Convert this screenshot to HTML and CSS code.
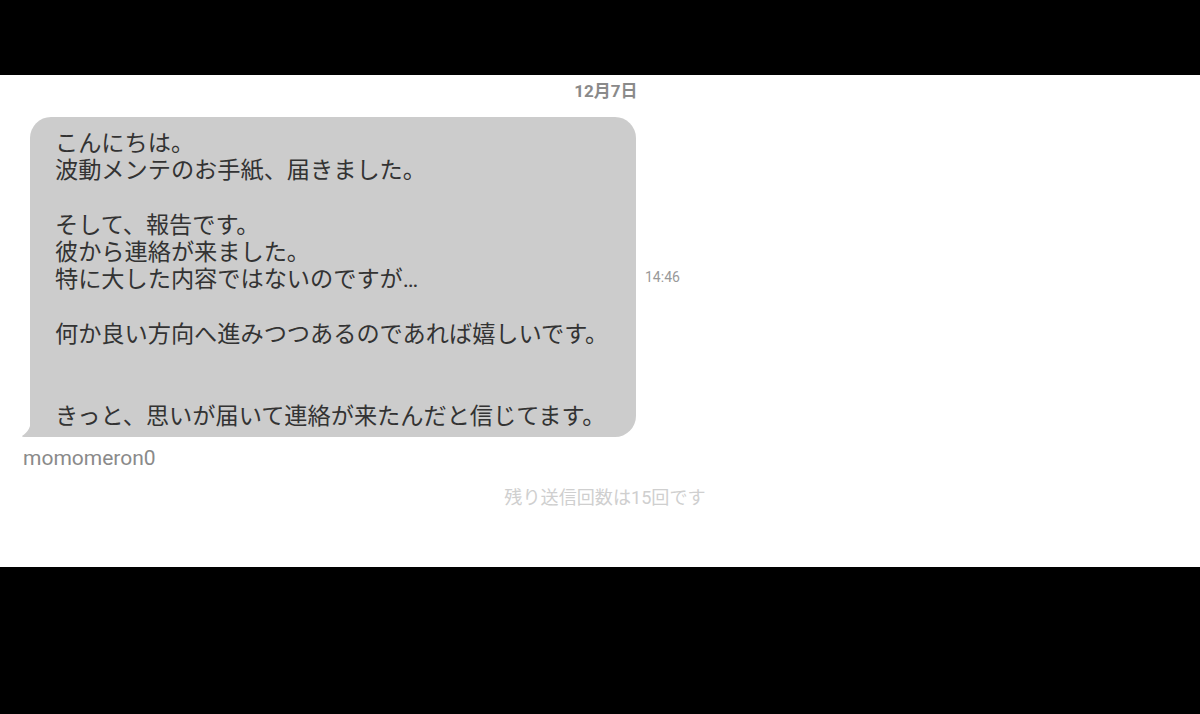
FILE: index.html
```html
<!DOCTYPE html>
<html lang="ja">
<head>
<meta charset="utf-8">
<link rel="stylesheet" href="styles.css">
</head>
<body>
<div class="screen">
  <div class="bar-top"></div>
  <div class="chat">
    <div class="date">12月7日</div>
    <div class="row">
      <div class="bubble">
        <svg class="tail" width="20" height="18" viewBox="0 0 20 18"><path d="M9 0 C9 8 6 13 0 17 Q0 18 2 18 L20 18 L20 0 Z" fill="#cccccc"/></svg>
        <div class="msg">こんにちは。
波動メンテのお手紙、届きました。

そして、報告です。
彼から連絡が来ました。
特に大した内容ではないのですが…

何か良い方向へ進みつつあるのであれば嬉しいです。


きっと、思いが届いて連絡が来たんだと信じてます。</div>
      </div>
      <div class="time">14:46</div>
    </div>
    <div class="user">momomeron0</div>
    <div class="remain">残り送信回数は15回です</div>
  </div>
  <div class="bar-bottom"></div>
</div>
</body>
</html>
```

FILE: styles.css
```css
html, body {
  margin: 0;
  padding: 0;
  background: #000;
}
.screen {
  width: 1200px;
  height: 714px;
  display: flex;
  flex-direction: column;
  font-family: Roboto, "Noto Sans CJK JP", sans-serif;
}
.bar-top {
  height: 75px;
  background: #000;
}
.chat {
  height: 492px;
  background: #fff;
  display: flex;
  flex-direction: column;
  box-sizing: border-box;
  padding-top: 6px;
}
.bar-bottom {
  flex: 1;
  background: #000;
}
.date {
  text-align: center;
  padding-left: 12px;
  font-size: 17px;
  line-height: 20px;
  font-weight: bold;
  color: #8a8a8a;
  height: 20px;
}
.row {
  margin-top: 16px;
  display: flex;
  align-items: center;
  padding-left: 30px;
}
.bubble {
  position: relative;
  width: 606px;
  box-sizing: border-box;
  background: #cccccc;
  border-radius: 21px 21px 21px 4px;
  padding: 13px 6px 7px 25px;
}
.tail {
  position: absolute;
  left: -8px;
  bottom: 0;
  display: block;
}
.msg {
  white-space: pre-line;
  font-family: Roboto, "Noto Sans CJK JP", sans-serif;
  font-size: 23.2px;
  line-height: 27.3px;
  color: #333;
}
.time {
  margin-left: 9px;
  font-size: 14px;
  color: #999;
}
.user {
  margin-top: 10px;
  padding-left: 23px;
  font-size: 21px;
  line-height: 22px;
  color: #8a8a8a;
}
.remain {
  margin-top: 18px;
  text-align: center;
  padding-left: 10px;
  font-size: 18.1px;
  line-height: 22px;
  color: #cfcfcf;
}
```
